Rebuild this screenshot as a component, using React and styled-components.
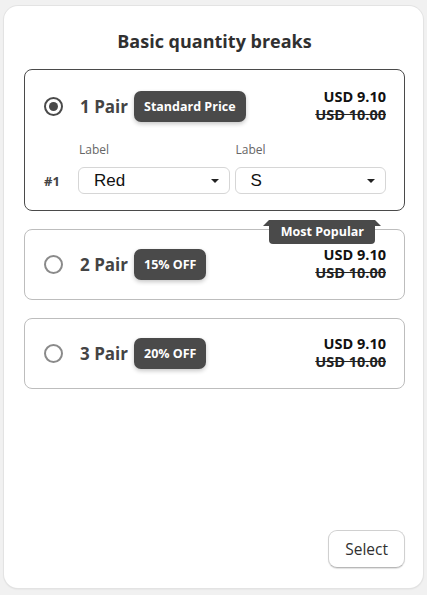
import React from 'react';
import styled, { createGlobalStyle } from 'styled-components';

const GlobalStyle = createGlobalStyle`
  html, body {
    margin: 0;
    padding: 0;
    background: #f1f1f1;
    font-family: "Open Sans", "Noto Sans", Arial, sans-serif;
  }
`;

const Page = styled.div`
  width: 427px;
  height: 595px;
  padding: 6px 4px 7px 4px;
  box-sizing: border-box;
`;

const Card = styled.div`
  height: 100%;
  box-sizing: border-box;
  background: #fff;
  border-radius: 14px;
  box-shadow: 0 0 0 1px #e3e3e3, 0 1px 2px rgba(0, 0, 0, 0.12);
  padding: 22px 18px 20px 20px;
  display: flex;
  flex-direction: column;
`;

const Title = styled.h2`
  margin: 0 0 15px;
  text-align: center;
  font-size: 18px;
  font-weight: 700;
  color: #303030;
  line-height: 26px;
`;

const List = styled.div`
  display: flex;
  flex-direction: column;
  gap: 18px;
`;

const Option = styled.div`
  position: relative;
  border: 1px solid ${(p) => (p.$active ? '#4a4a4a' : '#bdbdbd')};
  border-radius: 8px;
  padding: ${(p) => (p.$active ? '18px 18px 16px 19px' : '16px 18px 17px 19px')};
`;

const Row = styled.div`
  display: flex;
  align-items: center;
`;

const Radio = styled.span`
  width: 19px;
  height: 19px;
  box-sizing: border-box;
  border-radius: 50%;
  border: 2px solid ${(p) => (p.$checked ? '#4a4a4a' : '#8a8a8a')};
  display: flex;
  align-items: center;
  justify-content: center;
  flex-shrink: 0;
  &::after {
    content: '';
    display: ${(p) => (p.$checked ? 'block' : 'none')};
    width: 9px;
    height: 9px;
    border-radius: 50%;
    background: #4a4a4a;
  }
`;

const Qty = styled.span`
  margin-left: 17px;
  font-size: 17px;
  font-weight: 700;
  color: #444;
`;

const Badge = styled.span`
  margin-left: 6px;
  background: #4a4a4a;
  color: #fff;
  font-size: 12.5px;
  font-weight: 700;
  padding: 0 10px;
  height: 31px;
  line-height: 31px;
  border-radius: 7px;
  box-shadow: 0 2px 4px rgba(0, 0, 0, 0.22);
`;

const Price = styled.div`
  margin-left: auto;
  text-align: right;
  font-size: 14.5px;
  font-weight: 700;
  line-height: 18px;
  color: #111;
`;

const Old = styled.div`
  text-decoration: line-through;
  color: #222;
`;

const Variants = styled.div`
  display: grid;
  grid-template-columns: 29px 1fr 1fr;
  column-gap: 5px;
  row-gap: 9px;
  margin-top: 17px;
  align-items: center;
`;

const FieldLabel = styled.div`
  font-size: 12px;
  color: #666;
  padding-left: 1px;
`;

const Num = styled.div`
  font-size: 13px;
  font-weight: 700;
  color: #444;
`;

const Select = styled.div`
  height: 27px;
  box-sizing: border-box;
  border: 1px solid #d6d6d6;
  border-radius: 6px;
  display: flex;
  align-items: center;
  padding: 0 10px 0 15px;
  font-family: "Liberation Sans", Arial, sans-serif;
  font-size: 17px;
  color: #111;
  &::after {
    content: '';
    margin-left: auto;
    border-left: 4px solid transparent;
    border-right: 4px solid transparent;
    border-top: 4px solid #222;
  }
`;

const Ribbon = styled.div`
  position: absolute;
  top: -10px;
  right: 29px;
  background: #4a4a4a;
  color: #fff;
  font-size: 12.5px;
  font-weight: 700;
  height: 24px;
  line-height: 24px;
  padding: 0 11px 0 12px;
  border-radius: 0 0 4px 4px;
  &::before,
  &::after {
    content: '';
    position: absolute;
    top: 0;
    width: 0;
    height: 0;
    border-bottom: 6px solid #4a4a4a;
  }
  &::before {
    left: -6px;
    border-left: 6px solid transparent;
  }
  &::after {
    right: -6px;
    border-right: 6px solid transparent;
  }
`;

const Footer = styled.div`
  margin-top: auto;
  display: flex;
  justify-content: flex-end;
`;

const Button = styled.button`
  font-family: "Open Sans", "Noto Sans", Arial, sans-serif;
  font-size: 15.5px;
  color: #303030;
  background: #fff;
  border: 1px solid #d0d0d0;
  border-bottom-color: #b8b8b8;
  border-radius: 9px;
  height: 38px;
  padding: 0 16px;
  box-shadow: 0 1px 1px rgba(0, 0, 0, 0.12);
`;

const tiers = [
  { qty: '1 Pair', badge: 'Standard Price', active: true },
  { qty: '2 Pair', badge: '15% OFF', popular: true },
  { qty: '3 Pair', badge: '20% OFF' },
];

export default function App() {
  return (
    <>
      <GlobalStyle />
      <Page>
        <Card>
          <Title>Basic quantity breaks</Title>
          <List>
            {tiers.map((t) => (
              <Option key={t.qty} $active={t.active}>
                {t.popular && <Ribbon>Most Popular</Ribbon>}
                <Row>
                  <Radio $checked={t.active} />
                  <Qty>{t.qty}</Qty>
                  <Badge>{t.badge}</Badge>
                  <Price>
                    <div>USD 9.10</div>
                    <Old>USD 10.00</Old>
                  </Price>
                </Row>
                {t.active && (
                  <Variants>
                    <span />
                    <FieldLabel>Label</FieldLabel>
                    <FieldLabel>Label</FieldLabel>
                    <Num>#1</Num>
                    <Select>Red</Select>
                    <Select>S</Select>
                  </Variants>
                )}
              </Option>
            ))}
          </List>
          <Footer>
            <Button>Select</Button>
          </Footer>
        </Card>
      </Page>
    </>
  );
}
